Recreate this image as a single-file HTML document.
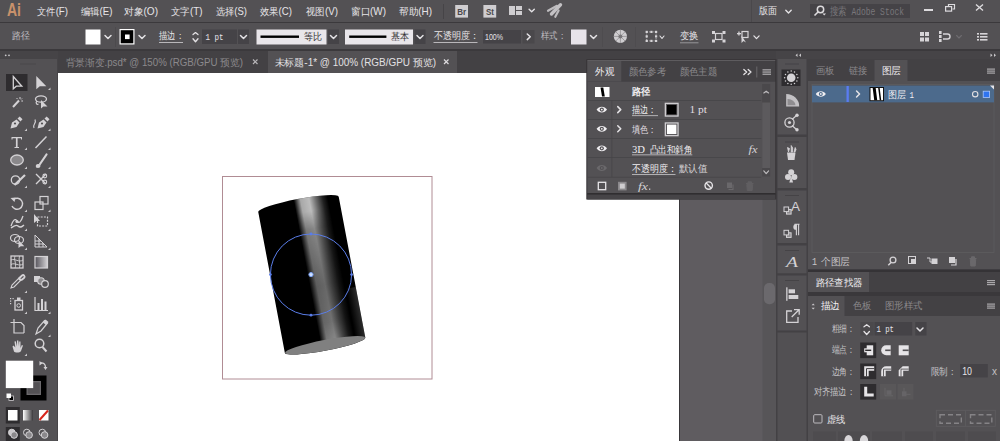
<!DOCTYPE html>
<html>
<head>
<meta charset="utf-8">
<title>Ai</title>
<style>
html,body{margin:0;padding:0;background:#535154;}
body{width:1000px;height:441px;overflow:hidden;font-family:"Liberation Sans",sans-serif;}
svg{display:block;position:absolute;left:0;top:0;}

.mono{font-family:"Liberation Mono",monospace;}
</style>
</head>
<body>
<svg width="1000" height="441" viewBox="0 0 1000 441" shape-rendering="auto">
<rect x="0" y="0" width="1000" height="441" fill="#535154" />
<rect x="0" y="22" width="1000" height="1" fill="#3b393c" />
<rect x="0" y="49" width="1000" height="2" fill="#3b393c" />
<rect x="58" y="51" width="718" height="22" fill="#434144" />
<rect x="268" y="51" width="189" height="22" fill="#535154" />
<rect x="58" y="73" width="621" height="368" fill="#ffffff" />
<rect x="679" y="73" width="85" height="368" fill="#5f5c60" />
<rect x="679" y="73" width="1" height="368" fill="#39373a" />
<rect x="0" y="51" width="58" height="8" fill="#464447" />
<rect x="57" y="51" width="1" height="390" fill="#464447" />
<text x="7" y="15.8" font-size="17.5" fill="#c8916b" font-weight="bold" font-family="Liberation Sans, sans-serif" textLength="14" lengthAdjust="spacingAndGlyphs" >Ai</text>
<text x="37" y="14.6" font-size="10.4" fill="#e6e4e7" font-weight="normal" font-family="Liberation Sans, sans-serif" textLength="31" lengthAdjust="spacingAndGlyphs" >文件(F)</text>
<text x="81" y="14.6" font-size="10.4" fill="#e6e4e7" font-weight="normal" font-family="Liberation Sans, sans-serif" textLength="31.5" lengthAdjust="spacingAndGlyphs" >编辑(E)</text>
<text x="124" y="14.6" font-size="10.4" fill="#e6e4e7" font-weight="normal" font-family="Liberation Sans, sans-serif" textLength="34" lengthAdjust="spacingAndGlyphs" >对象(O)</text>
<text x="171" y="14.6" font-size="10.4" fill="#e6e4e7" font-weight="normal" font-family="Liberation Sans, sans-serif" textLength="31.5" lengthAdjust="spacingAndGlyphs" >文字(T)</text>
<text x="216" y="14.6" font-size="10.4" fill="#e6e4e7" font-weight="normal" font-family="Liberation Sans, sans-serif" textLength="31" lengthAdjust="spacingAndGlyphs" >选择(S)</text>
<text x="260" y="14.6" font-size="10.4" fill="#e6e4e7" font-weight="normal" font-family="Liberation Sans, sans-serif" textLength="32" lengthAdjust="spacingAndGlyphs" >效果(C)</text>
<text x="306" y="14.6" font-size="10.4" fill="#e6e4e7" font-weight="normal" font-family="Liberation Sans, sans-serif" textLength="32" lengthAdjust="spacingAndGlyphs" >视图(V)</text>
<text x="351" y="14.6" font-size="10.4" fill="#e6e4e7" font-weight="normal" font-family="Liberation Sans, sans-serif" textLength="35" lengthAdjust="spacingAndGlyphs" >窗口(W)</text>
<text x="399" y="14.6" font-size="10.4" fill="#e6e4e7" font-weight="normal" font-family="Liberation Sans, sans-serif" textLength="33" lengthAdjust="spacingAndGlyphs" >帮助(H)</text>
<rect x="443" y="4" width="1" height="15" fill="#464447" />
<rect x="455.2" y="5" width="12.8" height="12.6" fill="#cfcdd0" />
<text x="457.3" y="14.8" font-size="8.5" fill="#4a484b" font-weight="bold" font-family="Liberation Sans, sans-serif" textLength="8.9" lengthAdjust="spacingAndGlyphs" >Br</text>
<rect x="483.4" y="5" width="12.8" height="12.6" fill="#cfcdd0" />
<text x="486" y="14.8" font-size="8.5" fill="#4a484b" font-weight="bold" font-family="Liberation Sans, sans-serif" textLength="8" lengthAdjust="spacingAndGlyphs" >St</text>
<rect x="509" y="6" width="6" height="9" fill="#cfcdd0" />
<rect x="516" y="6" width="6" height="4" fill="#cfcdd0" />
<rect x="516" y="11" width="6" height="4" fill="#cfcdd0" />
<path d="M529.1 9.3 L531.7 11.8 L534.3000000000001 9.3" stroke="#e4e2e5" fill="none" stroke-width="1.4" stroke-linecap="round" stroke-linejoin="round"/>
<path d="M548 10.8 L557 5.8" stroke="#bdbbbe" fill="none" stroke-width="2.2" stroke-linecap="round"/>
<path d="M551.5 14 L560.5 4.8" stroke="#c3c1c4" fill="none" stroke-width="3.4" stroke-linecap="round"/>
<path d="M555.3 16.8 L558.6 10.5" stroke="#bdbbbe" fill="none" stroke-width="2.2" stroke-linecap="round"/>
<rect x="751" y="0" width="1" height="22" fill="#4a484b" />
<text x="759" y="14.4" font-size="10.4" fill="#e6e4e7" font-weight="normal" font-family="Liberation Sans, sans-serif" textLength="18" lengthAdjust="spacingAndGlyphs" >版面</text>
<path d="M785.8 10.200000000000001 L788.5 12.9 L791.2 10.200000000000001" stroke="#e4e2e5" fill="none" stroke-width="1.4" stroke-linecap="round" stroke-linejoin="round"/>
<rect x="810" y="4" width="100" height="14" fill="#454347" />
<circle cx="820.5" cy="9.5" r="3.2" stroke="#dddbde" stroke-width="1.5" fill="none"/>
<path d="M818 12 L814.5 15.5" stroke="#dddbde" fill="none" stroke-width="1.6" />
<path d="M822.5 13.5 L826 13.5 L824.2 15.5 Z" stroke="none" fill="#dddbde" stroke-width="1" />
<text x="830" y="14.5" font-size="10.5" fill="#79777b" font-weight="normal" font-family="Liberation Mono, sans-serif" textLength="74" lengthAdjust="spacingAndGlyphs" >搜索 Adobe Stock</text>
<rect x="924" y="9" width="9" height="2" fill="#dddbde" />
<path d="M948.5 6.5 V4.5 H954.5 V9 H952.5" stroke="#dddbde" fill="none" stroke-width="1.2" />
<rect x="945.6" y="6.6" width="6" height="4.5" stroke="#dddbde" stroke-width="1.2" fill="none"/>
<path d="M976 4.5 L983 10.5 M983 4.5 L976 10.5" stroke="#dddbde" fill="none" stroke-width="1.4" />
<text x="12" y="39.4" font-size="9.6" fill="#bfbdc0" font-weight="normal" font-family="Liberation Sans, sans-serif" textLength="18" lengthAdjust="spacingAndGlyphs" >路径</text>
<rect x="85.5" y="29.5" width="15" height="15" fill="#ffffff" />
<path d="M105 35.55 L108 38.55 L111 35.55" stroke="#e4e2e5" fill="none" stroke-width="1.5" stroke-linecap="round" stroke-linejoin="round"/>
<rect x="115" y="27" width="1" height="20" fill="#4c4a4d" />
<rect x="119.5" y="29" width="15" height="15.5" fill="#ffffff" />
<rect x="120.7" y="30.2" width="12.6" height="13.1" fill="#000000" />
<rect x="125" y="34.5" width="4.6" height="4.6" fill="#ffffff" />
<path d="M139 35.55 L142 38.55 L145 35.55" stroke="#e4e2e5" fill="none" stroke-width="1.5" stroke-linecap="round" stroke-linejoin="round"/>
<text x="159" y="39.4" font-size="9.8" fill="#e6e4e7" font-weight="normal" font-family="Liberation Sans, sans-serif" textLength="25" lengthAdjust="spacingAndGlyphs" >描边：</text>
<rect x="159" y="42" width="24" height="1" fill="#b9b7ba" />
<path d="M193.0 34.55 L195.5 32.55 L198.0 34.55" stroke="#e4e2e5" fill="none" stroke-width="1.3" stroke-linecap="round" stroke-linejoin="round"/>
<path d="M193.0 38.75 L195.5 41.75 L198.0 38.75" stroke="#e4e2e5" fill="none" stroke-width="1.3" stroke-linecap="round" stroke-linejoin="round"/>
<rect x="202" y="29.5" width="35" height="14.5" fill="#454347" />
<text x="205.5" y="39.9" font-size="9.8" fill="#e6e4e7" font-weight="normal" font-family="Liberation Mono, sans-serif" textLength="18.0" lengthAdjust="spacingAndGlyphs" >1 pt</text>
<rect x="238" y="29.5" width="11" height="14.5" fill="#454347" />
<path d="M240.5 35.55 L243.5 38.55 L246.5 35.55" stroke="#e4e2e5" fill="none" stroke-width="1.5" stroke-linecap="round" stroke-linejoin="round"/>
<rect x="256.5" y="29.5" width="70" height="15" fill="#e9e6ea" />
<rect x="260.5" y="35.5" width="38.5" height="2.4" fill="#000000" />
<text x="304" y="39.8" font-size="9.6" fill="#333133" font-weight="normal" font-family="Liberation Sans, sans-serif" textLength="18" lengthAdjust="spacingAndGlyphs" >等比</text>
<rect x="328" y="29.5" width="11" height="14.5" fill="#454347" />
<path d="M330.5 35.55 L333.5 38.55 L336.5 35.55" stroke="#e4e2e5" fill="none" stroke-width="1.5" stroke-linecap="round" stroke-linejoin="round"/>
<rect x="345" y="29.5" width="68" height="15" fill="#e9e6ea" />
<rect x="349.2" y="35.5" width="37.2" height="2.4" fill="#000000" />
<text x="391" y="39.8" font-size="9.6" fill="#333133" font-weight="normal" font-family="Liberation Sans, sans-serif" textLength="18" lengthAdjust="spacingAndGlyphs" >基本</text>
<rect x="414.5" y="29.5" width="11" height="14.5" fill="#454347" />
<path d="M417 35.55 L420 38.55 L423 35.55" stroke="#e4e2e5" fill="none" stroke-width="1.5" stroke-linecap="round" stroke-linejoin="round"/>
<text x="433.5" y="39.4" font-size="9.8" fill="#e6e4e7" font-weight="normal" font-family="Liberation Sans, sans-serif" textLength="45.5" lengthAdjust="spacingAndGlyphs" >不透明度：</text>
<rect x="433.5" y="42" width="44" height="1" fill="#b9b7ba" />
<rect x="483" y="30" width="38" height="13.5" fill="#454347" />
<text x="485" y="39.6" font-size="9.6" fill="#e6e4e7" font-weight="normal" font-family="Liberation Sans, sans-serif" textLength="18" lengthAdjust="spacingAndGlyphs" >100%</text>
<rect x="522.5" y="30" width="12" height="13.5" fill="#4a484b" />
<path d="M527.25 34.0 L530.25 36.8 L527.25 39.599999999999994" stroke="#e4e2e5" fill="none" stroke-width="1.5" stroke-linecap="round" stroke-linejoin="round"/>
<text x="541" y="39.4" font-size="9.8" fill="#bfbdc0" font-weight="normal" font-family="Liberation Sans, sans-serif" textLength="25" lengthAdjust="spacingAndGlyphs" >样式：</text>
<rect x="571" y="29.5" width="15.5" height="15" fill="#e7e3e9" />
<path d="M590.5 35.55 L593.5 38.55 L596.5 35.55" stroke="#e4e2e5" fill="none" stroke-width="1.5" stroke-linecap="round" stroke-linejoin="round"/>
<rect x="602" y="27" width="1" height="20" fill="#4e4c4f" />
<circle cx="620.4" cy="36.4" r="6.6" fill="#cfcdd0"/>
<line x1="620.4" y1="36.4" x2="627.0" y2="36.4" stroke="#8a888b" stroke-width="0.7"/>
<line x1="620.4" y1="36.4" x2="625.1" y2="41.1" stroke="#8a888b" stroke-width="0.7"/>
<line x1="620.4" y1="36.4" x2="620.4" y2="43.0" stroke="#8a888b" stroke-width="0.7"/>
<line x1="620.4" y1="36.4" x2="615.7" y2="41.1" stroke="#8a888b" stroke-width="0.7"/>
<line x1="620.4" y1="36.4" x2="613.8" y2="36.4" stroke="#8a888b" stroke-width="0.7"/>
<line x1="620.4" y1="36.4" x2="615.7" y2="31.7" stroke="#8a888b" stroke-width="0.7"/>
<line x1="620.4" y1="36.4" x2="620.4" y2="29.8" stroke="#8a888b" stroke-width="0.7"/>
<line x1="620.4" y1="36.4" x2="625.1" y2="31.7" stroke="#8a888b" stroke-width="0.7"/>
<circle cx="620.4" cy="36.4" r="2" fill="#777578"/>
<rect x="635" y="27" width="1" height="20" fill="#4e4c4f" />
<rect x="646.7" y="31.9" width="9.4" height="9" stroke="#bdbbbe" stroke-width="0.8" stroke-dasharray="1.2 1" fill="none"/>
<rect x="645.6" y="30.799999999999997" width="2.2" height="2.2" fill="#d6d4d7" />
<rect x="645.6" y="35.3" width="2.2" height="2.2" fill="#d6d4d7" />
<rect x="645.6" y="39.8" width="2.2" height="2.2" fill="#d6d4d7" />
<rect x="650.3" y="30.799999999999997" width="2.2" height="2.2" fill="#d6d4d7" />
<rect x="650.3" y="39.8" width="2.2" height="2.2" fill="#d6d4d7" />
<rect x="655.0" y="30.799999999999997" width="2.2" height="2.2" fill="#d6d4d7" />
<rect x="655.0" y="35.3" width="2.2" height="2.2" fill="#d6d4d7" />
<rect x="655.0" y="39.8" width="2.2" height="2.2" fill="#d6d4d7" />
<path d="M660 36.0 L662 38.5 L664 36.0" stroke="#e4e2e5" fill="none" stroke-width="1.1" stroke-linecap="round" stroke-linejoin="round"/>
<text x="680" y="39.4" font-size="9.8" fill="#e6e4e7" font-weight="normal" font-family="Liberation Sans, sans-serif" textLength="18.5" lengthAdjust="spacingAndGlyphs" >变换</text>
<rect x="680" y="42.3" width="18.5" height="1" fill="#a9a7aa" opacity="0.8"/>
<rect x="715.5" y="33.5" width="6.5" height="6" stroke="#d6d4d7" stroke-width="1.2" fill="none"/>
<rect x="712" y="31" width="3" height="3" fill="#d6d4d7" />
<rect x="722.5" y="31" width="3" height="3" fill="#d6d4d7" />
<rect x="712" y="39.5" width="3" height="3" fill="#d6d4d7" />
<rect x="722.5" y="39.5" width="3" height="3" fill="#d6d4d7" />
<rect x="742" y="31.5" width="6" height="6" stroke="#d6d4d7" stroke-width="1.2" fill="none"/>
<rect x="737" y="33" width="4" height="1.3" fill="#d6d4d7" />
<rect x="738.3" y="31.5" width="1.3" height="4" fill="#d6d4d7" />
<path d="M741.5 35.5 L741.5 43 L743.5 41 L746 42.5 Z" stroke="none" fill="#d6d4d7" stroke-width="1" />
<path d="M753.9 35.9 L756.5 38.6 L759.1 35.9" stroke="#e4e2e5" fill="none" stroke-width="1.3" stroke-linecap="round" stroke-linejoin="round"/>
<rect x="920" y="32" width="4" height="4" fill="#d6d4d7" />
<rect x="925" y="32" width="4" height="4" fill="#d6d4d7" />
<rect x="920" y="37.5" width="4" height="4" fill="#d6d4d7" />
<rect x="925" y="37.5" width="4" height="4" fill="#d6d4d7" />
<rect x="939" y="31" width="2.6" height="3" fill="#d6d4d7" />
<rect x="939" y="35" width="2.6" height="3" fill="#d6d4d7" />
<rect x="939" y="39" width="2.6" height="3" fill="#d6d4d7" />
<path d="M943 34 H947.5 A2.5 2.5 0 0 1 947.5 39 H943" stroke="#d6d4d7" fill="none" stroke-width="1.4" />
<path d="M956.6 35.5 L959 38.0 L961.4 35.5" stroke="#6e6c70" fill="none" stroke-width="1.1" stroke-linecap="round" stroke-linejoin="round"/>
<rect x="977" y="33.0" width="2" height="1.6" fill="#d6d4d7" />
<rect x="980" y="33.0" width="7.5" height="1.6" fill="#d6d4d7" />
<rect x="977" y="36.0" width="2" height="1.6" fill="#d6d4d7" />
<rect x="980" y="36.0" width="7.5" height="1.6" fill="#d6d4d7" />
<rect x="977" y="39.0" width="2" height="1.6" fill="#d6d4d7" />
<rect x="980" y="39.0" width="7.5" height="1.6" fill="#d6d4d7" />
<text x="65.6" y="65.6" font-size="10" fill="#8b898c" font-weight="normal" font-family="Liberation Sans, sans-serif" textLength="177.4" lengthAdjust="spacingAndGlyphs" >背景渐变.psd* @ 150% (RGB/GPU 预览)</text>
<path d="M253 59.5 L257.5 64 M257.5 59.5 L253 64" stroke="#b8b6b9" fill="none" stroke-width="1.2" />
<text x="274.5" y="65.6" font-size="10" fill="#e2e0e3" font-weight="normal" font-family="Liberation Sans, sans-serif" textLength="161.5" lengthAdjust="spacingAndGlyphs" >未标题-1* @ 100% (RGB/GPU 预览)</text>
<path d="M444 59.5 L448.5 64 M448.5 59.5 L444 64" stroke="#dddbde" fill="none" stroke-width="1.2" />
<circle cx="5.7" cy="55.3" r="0.9" fill="#c9c7ca"/><circle cx="9" cy="55.3" r="0.9" fill="#c9c7ca"/>
<rect x="20" y="63.5" width="16" height="1" fill="#4a484b" />
<rect x="6" y="74" width="21.5" height="17" fill="#2e2c2f" />
<path d="M13.3 76.5 L13.3 88.8 L16.3 86.2 L21.8 86.2 Z" stroke="#d4d2d5" fill="none" stroke-width="1.3" stroke-linejoin="miter"/>
<path d="M36.3 76 L36.3 89.3 L39.8 86.3 L46.3 86.3 Z" stroke="none" fill="#d4d2d5" stroke-width="1" />
<path d="M50.5 87.5 L50.5 90 L48.0 90 Z" stroke="none" fill="#c9c7ca" stroke-width="1" />
<path d="M13 107 L19 100.5" stroke="#d4d2d5" fill="none" stroke-width="2" />
<path d="M20 97 V99 M22 98.5 L21 99.5 M23 101 H21.3 M16.5 98 L17.7 99.2" stroke="#d4d2d5" fill="none" stroke-width="1" />
<ellipse cx="41" cy="99" rx="5.5" ry="3.2" stroke="#d4d2d5" stroke-width="1.3" fill="none"/>
<path d="M37 101 C35 103 37 105 38.5 104" stroke="#d4d2d5" fill="none" stroke-width="1.2" />
<path d="M41 100 L41 108.5 L43.3 106.5 L47.5 106.5 Z" stroke="none" fill="#d4d2d5" stroke-width="1" />
<path d="M10.5 128.5 L12.0 122.5 L16.5 119.5 L19.5 122.5 L16.5 127 Z" stroke="none" fill="#d4d2d5" stroke-width="1" />
<path d="M17.5 118.5 L19.7 116.5 L22.5 119.3 L20.5 121.5 Z" stroke="none" fill="#d4d2d5" stroke-width="1" />
<circle cx="15.0" cy="123.5" r="1.1" fill="#535154"/>
<path d="M27 128.5 L27 131 L24.5 131 Z" stroke="none" fill="#c9c7ca" stroke-width="1" />
<path d="M37.5 128.5 L39.0 122.5 L43.5 119.5 L46.5 122.5 L43.5 127 Z" stroke="none" fill="#d4d2d5" stroke-width="1" />
<path d="M44.5 118.5 L46.7 116.5 L49.5 119.3 L47.5 121.5 Z" stroke="none" fill="#d4d2d5" stroke-width="1" />
<circle cx="42.0" cy="123.5" r="1.1" fill="#535154"/>
<path d="M34 128 C32 124 37 124 35 119.5" stroke="#d4d2d5" fill="none" stroke-width="1.2" />
<path d="M50.5 128.5 L50.5 131 L48.0 131 Z" stroke="none" fill="#c9c7ca" stroke-width="1" />
<path d="M11.5 137 H22 V139.5 H21 V138.3 H17.6 V147 H19 V148 H14.5 V147 H15.9 V138.3 H12.5 V139.5 H11.5 Z" stroke="none" fill="#d4d2d5" stroke-width="1" />
<path d="M27 147.5 L27 150 L24.5 150 Z" stroke="none" fill="#c9c7ca" stroke-width="1" />
<path d="M35.5 148 L46.5 136.5" stroke="#d4d2d5" fill="none" stroke-width="1.5" />
<path d="M50.5 147.5 L50.5 150 L48.0 150 Z" stroke="none" fill="#c9c7ca" stroke-width="1" />
<ellipse cx="17" cy="160" rx="6.3" ry="5" stroke="#d4d2d5" stroke-width="1.3" fill="#8a888b"/>
<path d="M27 166.5 L27 169 L24.5 169 Z" stroke="none" fill="#c9c7ca" stroke-width="1" />
<path d="M36 167.5 C35 164 38 163.5 39.5 164.5 L40.5 165.5 C40.5 168 38 168.5 36 167.5 Z" stroke="none" fill="#d4d2d5" stroke-width="1" />
<path d="M40 164 L46.5 154.5" stroke="#d4d2d5" fill="none" stroke-width="2.2" stroke-linecap="round"/>
<path d="M50.5 166.5 L50.5 169 L48.0 169 Z" stroke="none" fill="#c9c7ca" stroke-width="1" />
<circle cx="15.5" cy="180" r="4.2" stroke="#d4d2d5" stroke-width="1.3" fill="none"/>
<path d="M14.5 185 L25 175" stroke="#d4d2d5" fill="none" stroke-width="2.2" />
<path d="M27 185.5 L27 188 L24.5 188 Z" stroke="none" fill="#c9c7ca" stroke-width="1" />
<path d="M36 174 L46 184 M46 174 L36 184" stroke="#d4d2d5" fill="none" stroke-width="1.4" />
<circle cx="44.8" cy="176" r="1.9" stroke="#d4d2d5" stroke-width="1.1" fill="none"/><circle cx="44.8" cy="182" r="1.9" stroke="#d4d2d5" stroke-width="1.1" fill="none"/>
<path d="M50.5 185.5 L50.5 188 L48.0 188 Z" stroke="none" fill="#c9c7ca" stroke-width="1" />
<path d="M13.5 199.5 A5.5 5.5 0 1 1 12 206" stroke="#d4d2d5" fill="none" stroke-width="1.4" />
<path d="M10.5 198 L15.5 197.5 L14.5 202 Z" stroke="none" fill="#d4d2d5" stroke-width="1" />
<path d="M27 209.5 L27 212 L24.5 212 Z" stroke="none" fill="#c9c7ca" stroke-width="1" />
<rect x="35" y="202" width="8" height="7.5" stroke="#d4d2d5" stroke-width="1.2" fill="none"/><rect x="40" y="196.5" width="8" height="7.5" stroke="#d4d2d5" stroke-width="1.2" fill="none"/>
<path d="M50.5 209.5 L50.5 212 L48.0 212 Z" stroke="none" fill="#c9c7ca" stroke-width="1" />
<path d="M11 226 C13 220 15 218 17 221 C19 224 21 222 23 216" stroke="#d4d2d5" fill="none" stroke-width="1.3" />
<path d="M11 228 C14 226 16 224 18 226 C20 228 22 227 24 225" stroke="#d4d2d5" fill="none" stroke-width="1.3" />
<circle cx="17" cy="221.5" r="1.6" fill="#d4d2d5"/>
<path d="M27 228.5 L27 231 L24.5 231 Z" stroke="none" fill="#c9c7ca" stroke-width="1" />
<rect x="37.5" y="217" width="10" height="9" stroke="#d4d2d5" stroke-width="1.2" stroke-dasharray="2 1.2" fill="none"/>
<path d="M34 214 L34 223 L36.5 221 L40 221 Z" stroke="none" fill="#d4d2d5" stroke-width="1" />
<path d="M50.5 228.5 L50.5 231 L48.0 231 Z" stroke="none" fill="#c9c7ca" stroke-width="1" />
<ellipse cx="15" cy="238" rx="4.5" ry="3.5" stroke="#d4d2d5" stroke-width="1.2" fill="none"/><ellipse cx="19" cy="240" rx="4.5" ry="3.5" stroke="#d4d2d5" stroke-width="1.2" fill="none"/>
<path d="M18.5 240 L18.5 248 L20.7 246.2 L24.3 246.2 Z" stroke="none" fill="#d4d2d5" stroke-width="1" />
<path d="M27 247.5 L27 250 L24.5 250 Z" stroke="none" fill="#c9c7ca" stroke-width="1" />
<path d="M35 247 L35 235 L47 247 Z M35 241 L41 241 M39 239 L39 247 M43 243 L43 247 M35 244 L44 244" stroke="#d4d2d5" fill="none" stroke-width="1" />
<path d="M50.5 247.5 L50.5 250 L48.0 250 Z" stroke="none" fill="#c9c7ca" stroke-width="1" />
<rect x="11" y="256" width="12" height="12" stroke="#d4d2d5" stroke-width="1.3" fill="none"/>
<path d="M11 260 C15 258 19 263 23 260 M11 264.5 C15 262 19 267 23 264 M15 256 C13.5 260 17 264 15 268 M19.5 256 C18 260 21 264 19.5 268" stroke="#d4d2d5" fill="none" stroke-width="0.9" />
<defs><linearGradient id="gt" x1="0" x2="1" y1="0" y2="0"><stop offset="0" stop-color="#55535a"/><stop offset="1" stop-color="#d4d2d5"/></linearGradient></defs><rect x="35" y="256.5" width="12.5" height="11.5" stroke="#d4d2d5" stroke-width="1.2" fill="url(#gt)"/>
<path d="M11 288 L12 285 L18.5 278.5 L20.5 280.5 L14 287 Z" stroke="#d4d2d5" fill="none" stroke-width="1.1" />
<path d="M18.5 277.5 L21.5 280.5 M19.5 278 L22 275.5 A1.6 1.6 0 0 1 24 278 L21.5 280" stroke="#d4d2d5" fill="none" stroke-width="1.8" />
<path d="M27 290.5 L27 293 L24.5 293 Z" stroke="none" fill="#c9c7ca" stroke-width="1" />
<rect x="34" y="276" width="6" height="6" fill="#d4d2d5" />
<circle cx="41" cy="281" r="3.3" stroke="#d4d2d5" stroke-width="1.1" fill="#8a888b"/><circle cx="45" cy="284" r="3.3" stroke="#d4d2d5" stroke-width="1.2" fill="#535154"/>
<rect x="15" y="300.5" width="7.5" height="9.5" stroke="#d4d2d5" stroke-width="1.3" fill="none"/><circle cx="18.7" cy="305.5" r="1.8" stroke="#d4d2d5" stroke-width="1" fill="none"/>
<rect x="17" y="297.5" width="3.5" height="2.5" fill="#d4d2d5" />
<rect x="10" y="298" width="1.2" height="1.2" fill="#d4d2d5" />
<rect x="12.5" y="298" width="1.2" height="1.2" fill="#d4d2d5" />
<rect x="10" y="300.5" width="1.2" height="1.2" fill="#d4d2d5" />
<rect x="10" y="303" width="1.2" height="1.2" fill="#d4d2d5" />
<path d="M27 311.5 L27 314 L24.5 314 Z" stroke="none" fill="#c9c7ca" stroke-width="1" />
<path d="M35 297 V310.5 H48" stroke="#d4d2d5" fill="none" stroke-width="1.2" />
<rect x="37.5" y="303" width="2" height="7" fill="#d4d2d5" />
<rect x="41" y="299" width="2" height="11" fill="#d4d2d5" />
<rect x="44.5" y="301.5" width="2" height="8.5" fill="#d4d2d5" />
<path d="M50.5 311.5 L50.5 314 L48.0 314 Z" stroke="none" fill="#c9c7ca" stroke-width="1" />
<path d="M14 319 V333 H24 M10.5 322.5 H21 L24 325.5 V333" stroke="#d4d2d5" fill="none" stroke-width="1.2" />
<path d="M36 334 L38 328 L44.5 320.5 L47.5 323 L41 331 Z" stroke="#d4d2d5" fill="none" stroke-width="1.2" />
<path d="M43 322.5 L45.5 319.5 L48.5 322 L46 325" stroke="none" fill="#d4d2d5" stroke-width="1" />
<path d="M50.5 334.5 L50.5 337 L48.0 337 Z" stroke="none" fill="#c9c7ca" stroke-width="1" />
<path d="M12.5 346.5 L14 351.5 C15 353 20 353 21 351 L23 345.5 L21.8 345 L20.5 348 L20.5 341.5 L19.2 341.5 L19 346.5 L18.3 340.5 L17 340.5 L17 346.5 L15.8 341.3 L14.5 341.6 L15.3 347.5 L13.5 345.5 Z" stroke="none" fill="#d4d2d5" stroke-width="1" />
<path d="M27 353.5 L27 356 L24.5 356 Z" stroke="none" fill="#c9c7ca" stroke-width="1" />
<circle cx="39.5" cy="343.5" r="4.3" stroke="#d4d2d5" stroke-width="1.5" fill="none"/>
<path d="M42.5 347 L46.5 351.5" stroke="#d4d2d5" fill="none" stroke-width="2" />
<rect x="20.5" y="375.5" width="26" height="25" fill="#000000" />
<rect x="26.5" y="381" width="14.5" height="14" fill="#6b696c" />
<rect x="27.8" y="382.3" width="12" height="11.4" fill="#535154" />
<rect x="5.8" y="360.7" width="27.4" height="27.4" fill="#ffffff" />
<path d="M40.5 363 C43.5 362.5 45.5 364 45.5 367.5" stroke="#d4d2d5" fill="none" stroke-width="1.3" />
<path d="M39.5 361 L39.5 365.5 L42.5 363.3 Z M43.5 367 L47.5 367 L45.5 370 Z" stroke="none" fill="#d4d2d5" stroke-width="1" />
<rect x="9" y="396" width="4.5" height="4.5" fill="#000" stroke="#d4d2d5" stroke-width="0.8"/>
<rect x="6.5" y="393.5" width="4.5" height="4.5" fill="#ffffff" />
<rect x="5.8" y="407" width="14" height="16.5" fill="#2e2c2f" />
<rect x="8" y="410" width="9.5" height="10.5" fill="#ffffff" />
<defs><linearGradient id="g2" x1="0" x2="1"><stop offset="0" stop-color="#ffffff"/><stop offset="1" stop-color="#3a383b"/></linearGradient></defs>
<rect x="23" y="410" width="10" height="10.5" fill="url(#g2)" />
<rect x="39" y="410" width="9.5" height="10.5" fill="#ffffff" />
<path d="M39.5 420 L48 410.5" stroke="#d8261c" fill="none" stroke-width="2" />
<rect x="5.8" y="427" width="14" height="14" fill="#2e2c2f" />
<circle cx="11.8" cy="432.5" r="3.3" stroke="#d4d2d5" stroke-width="1" fill="#c9c7ca"/><circle cx="14.100000000000001" cy="435" r="3.3" stroke="#d4d2d5" stroke-width="1" fill="#8a888b"/>
<circle cx="26.8" cy="432.5" r="3.3" stroke="#d4d2d5" stroke-width="1" fill="none"/><circle cx="29.1" cy="435" r="3.3" stroke="#d4d2d5" stroke-width="1" fill="#8a888b"/>
<circle cx="42.3" cy="432.5" r="3.3" stroke="#d4d2d5" stroke-width="1" fill="none"/><circle cx="44.599999999999994" cy="435" r="3.3" stroke="#d4d2d5" stroke-width="1" fill="#8a888b"/>
<rect x="222.5" y="176.5" width="209.5" height="202.5" fill="none" stroke="#b08c94" stroke-width="1"/>
<defs>
<linearGradient id="hl" x1="0" x2="1" y1="0" y2="0">
<stop offset="0" stop-color="#fff" stop-opacity="0"/>
<stop offset="0.09" stop-color="#fff" stop-opacity="0.3"/>
<stop offset="0.2" stop-color="#fff" stop-opacity="0.66"/>
<stop offset="0.45" stop-color="#fff" stop-opacity="0.74"/>
<stop offset="0.65" stop-color="#fff" stop-opacity="0.42"/>
<stop offset="0.85" stop-color="#fff" stop-opacity="0.13"/>
<stop offset="1" stop-color="#fff" stop-opacity="0"/>
</linearGradient>
<linearGradient id="hlm" x1="0" x2="0" y1="0" y2="1">
<stop offset="0" stop-color="#fff" stop-opacity="1"/>
<stop offset="0.1" stop-color="#fff" stop-opacity="1"/>
<stop offset="0.22" stop-color="#fff" stop-opacity="0.72"/>
<stop offset="0.6" stop-color="#fff" stop-opacity="0.55"/>
<stop offset="0.85" stop-color="#fff" stop-opacity="0.6"/>
<stop offset="1" stop-color="#fff" stop-opacity="0.75"/>
</linearGradient>
<mask id="mk"><rect x="-60" y="-78" width="120" height="150" fill="url(#hlm)"/></mask>
<linearGradient id="edge" x1="0" x2="1" y1="0" y2="0">
<stop offset="0" stop-color="#fff" stop-opacity="0"/>
<stop offset="1" stop-color="#fff" stop-opacity="0.35"/>
</linearGradient>
<clipPath id="cyl"><path d="M-40.95 -71.7 A40.95 5.4 0 0 1 40.95 -71.7 L40.95 71.7 A40.95 5.4 0 0 1 -40.95 71.7 Z"/></clipPath>
</defs>
<g transform="translate(311.8 274.85) rotate(-10.7)">
<path d="M-40.95 -71.7 A40.95 5.4 0 0 1 40.95 -71.7 L40.95 71.7 A40.95 5.4 0 0 1 -40.95 71.7 Z" fill="#000"/>
<g clip-path="url(#cyl)"><g mask="url(#mk)"><rect x="-4" y="-80" width="34" height="160" fill="url(#hl)"/></g>
<rect x="31" y="20" width="10" height="60" fill="url(#edge)" opacity="0.5"/></g>
<ellipse cx="0" cy="71.7" rx="40.8" ry="5.3" fill="#808080"/>
</g>
<circle cx="311" cy="274.6" r="40.6" fill="none" stroke="#5a7de8" stroke-width="1"/>
<circle cx="270.4" cy="274.6" r="1.4" fill="#5a7de8"/>
<circle cx="351.6" cy="274.6" r="1.4" fill="#5a7de8"/>
<circle cx="311" cy="234" r="1.4" fill="#5a7de8"/>
<circle cx="311" cy="315.2" r="1.4" fill="#5a7de8"/>
<circle cx="311" cy="274.6" r="2.1" fill="#cfe0ff" stroke="#7aa2f5" stroke-width="1"/>
<rect x="762.5" y="73" width="13.5" height="368" fill="#575558" />
<rect x="764" y="283" width="11" height="21.2" rx="5" fill="#6b696d"/>
<rect x="776" y="51" width="224" height="390" fill="#434144" />
<rect x="776" y="51" width="224" height="8" fill="#464447" />
<path d="M797.5 53.5 L795.5 55.3 L797.5 57.1 Z M801 53.5 L799 55.3 L801 57.1 Z" fill="#c9c7ca"/>
<path d="M990.5 53.5 L992.5 55.3 L990.5 57.1 Z M994 53.5 L996 55.3 L994 57.1 Z" fill="#c9c7ca"/>
<rect x="777.5" y="59" width="29" height="75.5" fill="#535154" />
<rect x="785" y="63.5" width="14" height="1" fill="#454346" />
<rect x="777.5" y="137" width="29" height="51" fill="#535154" />
<rect x="785" y="141.5" width="14" height="1" fill="#454346" />
<rect x="777.5" y="190.5" width="29" height="52.5" fill="#535154" />
<rect x="785" y="195.0" width="14" height="1" fill="#454346" />
<rect x="777.5" y="245.5" width="29" height="27.80000000000001" fill="#535154" />
<rect x="785" y="250.0" width="14" height="1" fill="#454346" />
<rect x="777.5" y="275.5" width="29" height="55.0" fill="#535154" />
<rect x="785" y="280.0" width="14" height="1" fill="#454346" />
<rect x="777.5" y="332.5" width="29" height="109" fill="#525053" />
<rect x="781.5" y="69.5" width="19" height="16.5" fill="#2e2c2f" />
<circle cx="791.2" cy="77.7" r="4.3" fill="#d4d2d5"/>
<circle cx="797.8" cy="77.7" r="0.75" fill="#d4d2d5"/>
<circle cx="796.9" cy="81.0" r="0.75" fill="#d4d2d5"/>
<circle cx="794.5" cy="83.4" r="0.75" fill="#d4d2d5"/>
<circle cx="791.2" cy="84.3" r="0.75" fill="#d4d2d5"/>
<circle cx="787.9" cy="83.4" r="0.75" fill="#d4d2d5"/>
<circle cx="785.5" cy="81.0" r="0.75" fill="#d4d2d5"/>
<circle cx="784.6" cy="77.7" r="0.75" fill="#d4d2d5"/>
<circle cx="785.5" cy="74.4" r="0.75" fill="#d4d2d5"/>
<circle cx="787.9" cy="72.0" r="0.75" fill="#d4d2d5"/>
<circle cx="791.2" cy="71.1" r="0.75" fill="#d4d2d5"/>
<circle cx="794.5" cy="72.0" r="0.75" fill="#d4d2d5"/>
<circle cx="796.9" cy="74.4" r="0.75" fill="#d4d2d5"/>
<path d="M786.2 106.5 L786.2 94 A12.8 12.5 0 0 1 799.2 106.5 Z" stroke="none" fill="#c3c1c4" stroke-width="1" />
<path d="M787.5 105.2 L787.5 99 A7.5 6.5 0 0 1 795.5 105.2 Z" stroke="none" fill="#8f8d90" stroke-width="1" />
<circle cx="789.5" cy="122.5" r="4.6" stroke="#d4d2d5" stroke-width="1.3" fill="none"/><circle cx="789.5" cy="122.5" r="1.6" fill="#d4d2d5"/>
<path d="M792 119.5 L796.5 115.5 M792 125.5 L796.5 129.5" stroke="#d4d2d5" fill="none" stroke-width="1.2" />
<circle cx="797" cy="115.2" r="1.7" fill="#d4d2d5"/><circle cx="797" cy="129.8" r="1.7" fill="#d4d2d5"/>
<path d="M788 160 L787 152.5 L795.5 152.5 L794.5 160 Z" stroke="none" fill="#d4d2d5" stroke-width="1" />
<path d="M788.5 152 L787.5 147.5 L789.5 148.5 Z M791.2 152 L791.2 145.5 L792.7 148 L792.5 152 Z M794 152 L795.2 147.5 L796 149.5 L795 152 Z" stroke="#d4d2d5" fill="#d4d2d5" stroke-width="0.8" />
<circle cx="791.2" cy="172.3" r="3" fill="#d4d2d5"/><circle cx="788" cy="177" r="3" fill="#d4d2d5"/><circle cx="794.4" cy="177" r="3" fill="#d4d2d5"/>
<path d="M791.2 176 L789.3 182.5 H793.1 Z" stroke="none" fill="#d4d2d5" stroke-width="1" />
<rect x="786.5" y="209.5" width="4.6" height="4.6" stroke="#d4d2d5" stroke-width="1" fill="#8a888b"/><rect x="784" y="207" width="4.6" height="4.6" stroke="#d4d2d5" stroke-width="1" fill="#535154"/>
<text x="791" y="210.5" font-size="12" fill="#d4d2d5" font-weight="normal" font-family="Liberation Sans, sans-serif" textLength="9" lengthAdjust="spacingAndGlyphs" >A</text>
<rect x="786.5" y="232.8" width="4.6" height="4.6" stroke="#d4d2d5" stroke-width="1" fill="#8a888b"/><rect x="784" y="230.3" width="4.6" height="4.6" stroke="#d4d2d5" stroke-width="1" fill="#535154"/>
<path d="M794.5 224.3 H799.5 M796.4 224.3 V235.3 M798.6 224.3 V235.3" stroke="#d4d2d5" fill="none" stroke-width="1.1" />
<path d="M796.2 224 A2.9 2.9 0 0 0 796.2 229.8 Z" fill="#d4d2d5"/>
<text x="786" y="267.3" font-size="14.5" fill="#d4d2d5" font-weight="normal" font-family="Liberation Serif, sans-serif" textLength="12" lengthAdjust="spacingAndGlyphs" font-style="italic">A</text>
<rect x="786.2" y="287.3" width="1.3" height="13.5" fill="#d4d2d5" />
<rect x="788.6" y="289.3" width="6.4" height="4" fill="#d4d2d5" />
<rect x="788.6" y="295" width="9.7" height="4" fill="#d4d2d5" />
<path d="M792 311 H786.7 V322.3 H798 V317" stroke="#d4d2d5" fill="none" stroke-width="1.3" />
<path d="M791.7 317 L799 309.8 M794 309.6 H799.2 V314.8" stroke="#d4d2d5" fill="none" stroke-width="1.3" />
<rect x="808" y="60" width="192" height="21" fill="#434144" />
<rect x="874.5" y="60" width="33" height="21" fill="#535154" />
<rect x="808" y="81" width="192" height="188.5" fill="#535154" />
<rect x="812" y="84.5" width="182" height="168" fill="none" stroke="#5e5c5f" stroke-width="0.8"/>
<text x="816" y="74.2" font-size="9.8" fill="#8b898c" font-weight="normal" font-family="Liberation Sans, sans-serif" textLength="18.5" lengthAdjust="spacingAndGlyphs" >画板</text>
<text x="849" y="74.2" font-size="9.8" fill="#8b898c" font-weight="normal" font-family="Liberation Sans, sans-serif" textLength="18.5" lengthAdjust="spacingAndGlyphs" >链接</text>
<text x="881.5" y="74.2" font-size="9.8" fill="#f0eef1" font-weight="normal" font-family="Liberation Sans, sans-serif" textLength="19.5" lengthAdjust="spacingAndGlyphs" >图层</text>
<rect x="987" y="68.5" width="8" height="1.2" fill="#a9a7aa" />
<rect x="987" y="70.5" width="8" height="1.2" fill="#a9a7aa" />
<rect x="987" y="72.5" width="8" height="1.2" fill="#a9a7aa" />
<rect x="812" y="85.6" width="182" height="16.8" fill="#4c6a8c" />
<path d="M815.8 94 C818 90.3 823.6 90.3 825.8 94 C823.6 97.7 818 97.7 815.8 94 Z" stroke="none" fill="#f0eef1" stroke-width="1" />
<circle cx="820.8" cy="94" r="2" fill="#4c6a8c"/><circle cx="820.8" cy="94" r="0.9" fill="#f0eef1"/>
<rect x="846.5" y="86" width="2.3" height="16" fill="#5a7cf2" />
<path d="M856.55 91 L859.55 94 L856.55 97" stroke="#e4e2e5" fill="none" stroke-width="1.5" stroke-linecap="round" stroke-linejoin="round"/>
<rect x="869.5" y="87" width="14.5" height="14.2" fill="#111" />
<rect x="870.5" y="88" width="12.5" height="12.2" fill="#fff" />
<path d="M872.7 88 L875.7 88 L877.2 100.2 L874.2 100.2 Z" stroke="none" fill="#000" stroke-width="1" />
<path d="M878.2 88 L879.7 88 L881.2 100.2 L879.7 100.2 Z" stroke="none" fill="#000" stroke-width="1" />
<text x="888" y="97.7" font-size="9.8" fill="#f0eef1" font-weight="normal" font-family="Liberation Sans, sans-serif" textLength="18" lengthAdjust="spacingAndGlyphs" >图层</text>
<text x="909.5" y="97.7" font-size="9.8" fill="#f0eef1" font-weight="normal" font-family="Liberation Mono, sans-serif" textLength="4.5" lengthAdjust="spacingAndGlyphs" >1</text>
<circle cx="975.2" cy="94.2" r="2.7" stroke="#e0dee1" stroke-width="1.1" fill="none"/>
<rect x="983.2" y="91.2" width="6.4" height="6.2" fill="#2f74f0" stroke="#a9c6ff" stroke-width="0.8"/>
<path d="M990 85.6 H994 V89.6 Z" stroke="none" fill="#e8e6e9" stroke-width="1" />
<text x="812" y="265" font-size="10" fill="#c9c7ca" font-weight="normal" font-family="Liberation Mono, sans-serif" textLength="5" lengthAdjust="spacingAndGlyphs" >1</text>
<text x="821" y="265" font-size="10" fill="#c9c7ca" font-weight="normal" font-family="Liberation Sans, sans-serif" textLength="29" lengthAdjust="spacingAndGlyphs" >个图层</text>
<circle cx="893" cy="260" r="2.9" stroke="#d4d2d5" stroke-width="1.3" fill="none"/>
<path d="M891 262.5 L888.3 265.3" stroke="#d4d2d5" fill="none" stroke-width="1.5" />
<rect x="908.5" y="256.5" width="7" height="7" stroke="#d4d2d5" stroke-width="1" fill="none"/><rect x="911" y="259" width="4.5" height="4.5" fill="#d4d2d5"/>
<path d="M927 258 H930 V262 H932" stroke="#d4d2d5" fill="none" stroke-width="1" />
<rect x="931.5" y="258.5" width="6" height="5.5" fill="#d4d2d5" />
<rect x="949" y="257" width="6" height="6" fill="#d4d2d5" />
<path d="M956 259 V265 H951" stroke="#d4d2d5" fill="none" stroke-width="1.2" />
<path d="M969.5 258.5 H976.5 M971.5 258 V256.8 H974.5 V258 M970.3 259.5 L970.8 266 H975.2 L975.7 259.5 Z" stroke="#6a686b" fill="#6a686b" stroke-width="1" />
<rect x="808" y="269.5" width="192" height="2.5" fill="#353336" />
<rect x="808" y="272" width="192" height="20" fill="#434144" />
<rect x="808" y="272" width="61" height="20" fill="#535154" />
<text x="815.5" y="286.2" font-size="9.8" fill="#f0eef1" font-weight="normal" font-family="Liberation Sans, sans-serif" textLength="47.0" lengthAdjust="spacingAndGlyphs" >路径查找器</text>
<rect x="987" y="280" width="8" height="1.2" fill="#a9a7aa" />
<rect x="987" y="282" width="8" height="1.2" fill="#a9a7aa" />
<rect x="987" y="284" width="8" height="1.2" fill="#a9a7aa" />
<rect x="808" y="292" width="192" height="4" fill="#3a383b" />
<rect x="808" y="296" width="192" height="20" fill="#434144" />
<rect x="808" y="296" width="36.5" height="20" fill="#535154" />
<rect x="808" y="316" width="192" height="125" fill="#535154" />
<path d="M813.2 303.5 L811.6 305.3 H814.8 Z M813.2 309.5 L811.6 307.7 H814.8 Z" stroke="none" fill="#c9c7ca" stroke-width="1" />
<text x="820.5" y="309.2" font-size="9.8" fill="#f0eef1" font-weight="normal" font-family="Liberation Sans, sans-serif" textLength="19.5" lengthAdjust="spacingAndGlyphs" >描边</text>
<text x="852.5" y="309.2" font-size="9.8" fill="#8b898c" font-weight="normal" font-family="Liberation Sans, sans-serif" textLength="18.5" lengthAdjust="spacingAndGlyphs" >色板</text>
<text x="885" y="309.2" font-size="9.8" fill="#8b898c" font-weight="normal" font-family="Liberation Sans, sans-serif" textLength="37.5" lengthAdjust="spacingAndGlyphs" >图形样式</text>
<rect x="987" y="303.5" width="8" height="1.2" fill="#a9a7aa" />
<rect x="987" y="305.5" width="8" height="1.2" fill="#a9a7aa" />
<rect x="987" y="307.5" width="8" height="1.2" fill="#a9a7aa" />
<text x="831.5" y="332.2" font-size="9.8" fill="#c3c1c4" font-weight="normal" font-family="Liberation Sans, sans-serif" textLength="23.5" lengthAdjust="spacingAndGlyphs" >粗细：</text>
<rect x="860.5" y="322" width="13.2" height="13.5" fill="#4b494c" />
<path d="M864.0 326.75 L866.7 324.75 L869.4000000000001 326.75" stroke="#e4e2e5" fill="none" stroke-width="1.3" stroke-linecap="round" stroke-linejoin="round"/>
<path d="M864.0 331.45 L866.7 334.45 L869.4000000000001 331.45" stroke="#e4e2e5" fill="none" stroke-width="1.3" stroke-linecap="round" stroke-linejoin="round"/>
<rect x="874.5" y="322" width="37.7" height="13.5" fill="#454347" />
<text x="876.5" y="332.0" font-size="9.8" fill="#e6e4e7" font-weight="normal" font-family="Liberation Mono, sans-serif" textLength="17.5" lengthAdjust="spacingAndGlyphs" >1 pt</text>
<rect x="915.3" y="322" width="11.2" height="13.5" fill="#454347" />
<path d="M917 328.05 L920 331.05 L923 328.05" stroke="#e4e2e5" fill="none" stroke-width="1.5" stroke-linecap="round" stroke-linejoin="round"/>
<text x="831.5" y="352.7" font-size="9.8" fill="#c3c1c4" font-weight="normal" font-family="Liberation Sans, sans-serif" textLength="23.5" lengthAdjust="spacingAndGlyphs" >端点：</text>
<text x="831.5" y="374.7" font-size="9.8" fill="#c3c1c4" font-weight="normal" font-family="Liberation Sans, sans-serif" textLength="23.5" lengthAdjust="spacingAndGlyphs" >边角：</text>
<text x="813.5" y="395.2" font-size="9.8" fill="#c3c1c4" font-weight="normal" font-family="Liberation Sans, sans-serif" textLength="41.5" lengthAdjust="spacingAndGlyphs" >对齐描边：</text>
<rect x="860.2" y="342.5" width="16" height="15.6" fill="#2e2c2f" />
<rect x="866.7" y="345.3" width="6.5" height="10" fill="#e6e4e7" />
<rect x="864.2" y="348.3" width="3" height="4" fill="#e6e4e7" />
<rect x="865.2" y="349.6" width="6" height="1.4" fill="#2e2c2f" />
<path d="M890.7 345.3 H886.2 A5 5 0 0 0 886.2 355.3 H890.7 Z" fill="#e6e4e7"/>
<rect x="885.2" y="349.5" width="5.5" height="1.6" fill="#535154" />
<rect x="898.7" y="345.3" width="10" height="10" fill="#e6e4e7" />
<rect x="902.7" y="349.5" width="6" height="1.6" fill="#535154" />
<rect x="860.2" y="363.5" width="16" height="15.6" fill="#2e2c2f" />
<path d="M864.2 376.3 V366.3 H874.2 V370.8 H868.7 V376.3 Z" stroke="none" fill="#e6e4e7" stroke-width="1" />
<path d="M866.5 376.3 V368.6 H874.2" stroke="#2e2c2f" fill="none" stroke-width="0.9" />
<path d="M881.2 376.3 V371.3 A5 5 0 0 1 886.2 366.3 H891.2 V370.8 H885.7 V376.3 Z" stroke="none" fill="#e6e4e7" stroke-width="1" />
<path d="M883.5 376.3 V369.1 H891.2" stroke="#535154" fill="none" stroke-width="0.9" />
<path d="M898.7 376.3 V370.3 L902.7 366.3 H908.7 V370.8 H903.2 V376.3 Z" stroke="none" fill="#e6e4e7" stroke-width="1" />
<path d="M901.0 376.3 V369.1 H908.7" stroke="#535154" fill="none" stroke-width="0.9" />
<rect x="860.2" y="384.0" width="16" height="15.6" fill="#2e2c2f" />
<path d="M865.7 386.8 V395.1 H873.7" stroke="#e6e4e7" fill="none" stroke-width="3" />
<rect x="880" y="384.0" width="16" height="15.6" fill="#595759" />
<path d="M885 387.8 V395.8 H893" stroke="#666467" fill="none" stroke-width="1" />
<rect x="886.5" y="390.3" width="5" height="4.5" fill="#666467" />
<rect x="897.5" y="384.0" width="16" height="15.6" fill="#595759" />
<path d="M904.0 387.8 V394.3 H910.5" stroke="#666467" fill="none" stroke-width="1" />
<rect x="902.0" y="391.3" width="4.5" height="5" fill="#666467" />
<text x="930.5" y="374.7" font-size="9.8" fill="#c3c1c4" font-weight="normal" font-family="Liberation Sans, sans-serif" textLength="25.5" lengthAdjust="spacingAndGlyphs" >限制：</text>
<rect x="960.2" y="364" width="27.6" height="13.4" fill="#454347" />
<text x="962.2" y="374.5" font-size="10" fill="#e6e4e7" font-weight="normal" font-family="Liberation Sans, sans-serif" textLength="9.8" lengthAdjust="spacingAndGlyphs" >10</text>
<text x="992" y="375" font-size="10" fill="#c3c1c4" font-weight="normal" font-family="Liberation Sans, sans-serif" textLength="5" lengthAdjust="spacingAndGlyphs" >x</text>
<rect x="813.7" y="414.7" width="8.3" height="8.3" stroke="#bdbbbe" stroke-width="1" fill="none" rx="1"/>
<text x="827" y="422.8" font-size="9.8" fill="#e6e4e7" font-weight="normal" font-family="Liberation Sans, sans-serif" textLength="18.5" lengthAdjust="spacingAndGlyphs" >虚线</text>
<rect x="936.3" y="410.3" width="59" height="16" stroke="#5e5c5f" stroke-width="0.9" fill="none"/>
<rect x="965.2" y="410.3" width="0.9" height="16" fill="#5e5c5f" />
<rect x="940" y="414.8" width="21.3" height="8.4" stroke="#858386" stroke-width="1.4" stroke-dasharray="5 3" fill="none"/>
<rect x="970.5" y="414.8" width="21.3" height="8.4" stroke="#858386" stroke-width="1.4" stroke-dasharray="5 3" fill="none"/>
<rect x="813" y="431.5" width="23" height="10" fill="#4e4c4f" />
<rect x="838" y="431.5" width="32" height="10" fill="#4e4c4f" />
<rect x="872" y="431.5" width="30" height="10" fill="#4e4c4f" />
<rect x="905" y="431.5" width="28" height="10" fill="#4e4c4f" />
<rect x="936" y="431.5" width="29" height="10" fill="#4e4c4f" />
<rect x="968" y="431.5" width="28" height="10" fill="#4e4c4f" />
<ellipse cx="848.5" cy="441" rx="4.2" ry="6" fill="#d8d6d9"/><ellipse cx="864" cy="441" rx="4.2" ry="6" fill="#d8d6d9"/>
<rect x="586.3" y="59.3" width="190.0" height="140.2" fill="#353336" />
<rect x="587.3" y="60" width="188.0" height="1" fill="#5e5c5f" />
<rect x="587.3" y="61" width="188.0" height="20.5" fill="#434144" />
<rect x="587.3" y="61" width="34" height="20.5" fill="#535154" />
<rect x="587.3" y="81.5" width="188.0" height="111.7" fill="#535154" />
<rect x="587.3" y="193.2" width="188.0" height="1.4" fill="#2e2c2f" />
<rect x="587.3" y="194.6" width="188.0" height="4.9" fill="#464447" />
<text x="595" y="75.2" font-size="9.8" fill="#f0eef1" font-weight="normal" font-family="Liberation Sans, sans-serif" textLength="19" lengthAdjust="spacingAndGlyphs" >外观</text>
<text x="628.5" y="75.2" font-size="9.8" fill="#8b898c" font-weight="normal" font-family="Liberation Sans, sans-serif" textLength="37.5" lengthAdjust="spacingAndGlyphs" >颜色参考</text>
<text x="679.5" y="75.2" font-size="9.8" fill="#8b898c" font-weight="normal" font-family="Liberation Sans, sans-serif" textLength="37.5" lengthAdjust="spacingAndGlyphs" >颜色主题</text>
<path d="M743.85 69.4 L746.65 72 L743.85 74.6" stroke="#e4e2e5" fill="none" stroke-width="1.3" stroke-linecap="round" stroke-linejoin="round"/>
<path d="M748.15 69.4 L750.9499999999999 72 L748.15 74.6" stroke="#e4e2e5" fill="none" stroke-width="1.3" stroke-linecap="round" stroke-linejoin="round"/>
<rect x="756.3" y="66.5" width="1" height="11" fill="#6a686b" />
<rect x="762.5" y="69.2" width="8.5" height="1.3" fill="#a9a7aa" />
<rect x="762.5" y="71.4" width="8.5" height="1.3" fill="#a9a7aa" />
<rect x="762.5" y="73.6" width="8.5" height="1.3" fill="#a9a7aa" />
<rect x="587.3" y="100" width="174.0" height="0.8" fill="#474548" />
<rect x="587.3" y="119" width="174.0" height="0.8" fill="#474548" />
<rect x="587.3" y="138" width="174.0" height="0.8" fill="#474548" />
<rect x="587.3" y="157" width="174.0" height="0.8" fill="#474548" />
<rect x="587.3" y="176.8" width="174.0" height="0.8" fill="#474548" />
<rect x="611.5" y="100" width="0.8" height="77" fill="#474548" />
<rect x="595" y="87" width="14.5" height="10" fill="#ffffff" />
<path d="M600.5 87.5 L603.3 87.5 L604.8 96.5 L602 96.5 Z" stroke="none" fill="#000" stroke-width="1" />
<text x="632" y="94.5" font-size="9.8" fill="#f0eef1" font-weight="bold" font-family="Liberation Sans, sans-serif" textLength="18.5" lengthAdjust="spacingAndGlyphs" >路径</text>
<g opacity="1"><path d="M596.5999999999999 109.6 C598.8 105.69999999999999 604.8 105.69999999999999 607.0 109.6 C604.8 113.5 598.8 113.5 596.5999999999999 109.6 Z" fill="#f0eef1"/><circle cx="601.8" cy="109.6" r="2.1" fill="#535154"/><circle cx="601.8" cy="109.6" r="0.9" fill="#f0eef1"/></g>
<g opacity="1"><path d="M596.5999999999999 128.8 C598.8 124.9 604.8 124.9 607.0 128.8 C604.8 132.70000000000002 598.8 132.70000000000002 596.5999999999999 128.8 Z" fill="#f0eef1"/><circle cx="601.8" cy="128.8" r="2.1" fill="#535154"/><circle cx="601.8" cy="128.8" r="0.9" fill="#f0eef1"/></g>
<g opacity="1"><path d="M596.5999999999999 148.3 C598.8 144.4 604.8 144.4 607.0 148.3 C604.8 152.20000000000002 598.8 152.20000000000002 596.5999999999999 148.3 Z" fill="#f0eef1"/><circle cx="601.8" cy="148.3" r="2.1" fill="#535154"/><circle cx="601.8" cy="148.3" r="0.9" fill="#f0eef1"/></g>
<g opacity="1"><path d="M596.5999999999999 168 C598.8 164.1 604.8 164.1 607.0 168 C604.8 171.9 598.8 171.9 596.5999999999999 168 Z" fill="#6a686b"/><circle cx="601.8" cy="168" r="2.1" fill="#535154"/><circle cx="601.8" cy="168" r="0.9" fill="#6a686b"/></g>
<path d="M617.75 106.6 L620.75 109.6 L617.75 112.6" stroke="#e4e2e5" fill="none" stroke-width="1.5" stroke-linecap="round" stroke-linejoin="round"/>
<path d="M617.75 125.80000000000001 L620.75 128.8 L617.75 131.8" stroke="#e4e2e5" fill="none" stroke-width="1.5" stroke-linecap="round" stroke-linejoin="round"/>
<text x="632" y="113.3" font-size="9.8" fill="#f0eef1" font-weight="normal" font-family="Liberation Sans, sans-serif" textLength="24.5" lengthAdjust="spacingAndGlyphs" >描边：</text>
<rect x="632" y="115.2" width="26" height="0.9" fill="#bdbbbe" />
<rect x="664.7" y="102.7" width="14" height="14" fill="#cfcdd0" />
<rect x="666" y="104" width="11.4" height="11.4" fill="#5a585b" />
<rect x="667" y="105" width="9.4" height="9.4" fill="#000" />
<text x="689.5" y="112.7" font-size="9.8" fill="#e0dee1" font-weight="normal" font-family="Liberation Serif, sans-serif" textLength="17.5" lengthAdjust="spacingAndGlyphs" >1 pt</text>
<text x="632" y="132.9" font-size="9.8" fill="#e0dee1" font-weight="normal" font-family="Liberation Sans, sans-serif" textLength="24.5" lengthAdjust="spacingAndGlyphs" >填色：</text>
<rect x="664.7" y="122.3" width="14" height="14" fill="#cfcdd0" />
<rect x="666" y="123.6" width="11.4" height="11.4" fill="#5a585b" />
<rect x="667" y="124.6" width="9.4" height="9.4" fill="#fff" />
<text x="632" y="152.8" font-size="9.8" fill="#f0eef1" font-weight="normal" font-family="Liberation Serif, sans-serif" textLength="13" lengthAdjust="spacingAndGlyphs" >3D</text>
<text x="650" y="152.8" font-size="9.8" fill="#f0eef1" font-weight="normal" font-family="Liberation Sans, sans-serif" textLength="42.3" lengthAdjust="spacingAndGlyphs" >凸出和斜角</text>
<rect x="632" y="154.4" width="60.3" height="0.9" fill="#bdbbbe" />
<text x="748.5" y="152.5" font-size="11" fill="#d4d2d5" font-weight="normal" font-family="Liberation Serif, sans-serif" textLength="9.0" lengthAdjust="spacingAndGlyphs" font-style="italic">fx</text>
<text x="632" y="171.9" font-size="9.8" fill="#f0eef1" font-weight="normal" font-family="Liberation Sans, sans-serif" textLength="45" lengthAdjust="spacingAndGlyphs" >不透明度：</text>
<rect x="632" y="174" width="43.5" height="0.9" fill="#bdbbbe" />
<text x="678.5" y="171.9" font-size="9.8" fill="#d4d2d5" font-weight="normal" font-family="Liberation Sans, sans-serif" textLength="28.5" lengthAdjust="spacingAndGlyphs" >默认值</text>
<rect x="762.2" y="84" width="8" height="92.5" fill="#4a484b" />
<rect x="762.2" y="102.5" width="8" height="65.5" fill="#5c5a5d" />
<path d="M763.8000000000001 92.89999999999999 L766.2 91.2 L768.6 92.89999999999999" stroke="#bdbbbe" fill="none" stroke-width="1.2" stroke-linecap="round" stroke-linejoin="round"/>
<path d="M763.8000000000001 170.9 L766.2 173.6 L768.6 170.9" stroke="#bdbbbe" fill="none" stroke-width="1.2" stroke-linecap="round" stroke-linejoin="round"/>
<rect x="598.3" y="182.3" width="7.4" height="7.4" stroke="#e6e4e7" stroke-width="1.3" fill="none"/>
<rect x="618" y="181.8" width="8.6" height="8.6" fill="#8a888b"/><rect x="619.8" y="183.6" width="5" height="5" fill="#cfcdd0"/>
<text x="638" y="189.5" font-size="11" fill="#d4d2d5" font-weight="normal" font-family="Liberation Serif, sans-serif" textLength="10" lengthAdjust="spacingAndGlyphs" font-style="italic">fx</text>
<rect x="649" y="188.5" width="1.3" height="1.3" fill="#d4d2d5" />
<circle cx="708.7" cy="185.6" r="3.7" stroke="#e6e4e7" stroke-width="1.4" fill="none"/>
<path d="M706.2 183 L711.3 188.2" stroke="#e6e4e7" fill="none" stroke-width="1.3" />
<rect x="727" y="182.5" width="5" height="5.5" fill="#6a686b" />
<path d="M733 184.5 V189.5 H728.5" stroke="#6a686b" fill="none" stroke-width="1.1" />
<path d="M746 183.5 H753.5 M748 183 V181.8 H751.5 V183 M746.8 184.5 L747.3 190.5 H752.2 L752.7 184.5 Z" stroke="#605e61" fill="#605e61" stroke-width="1" />
</svg>
</body>
</html>
